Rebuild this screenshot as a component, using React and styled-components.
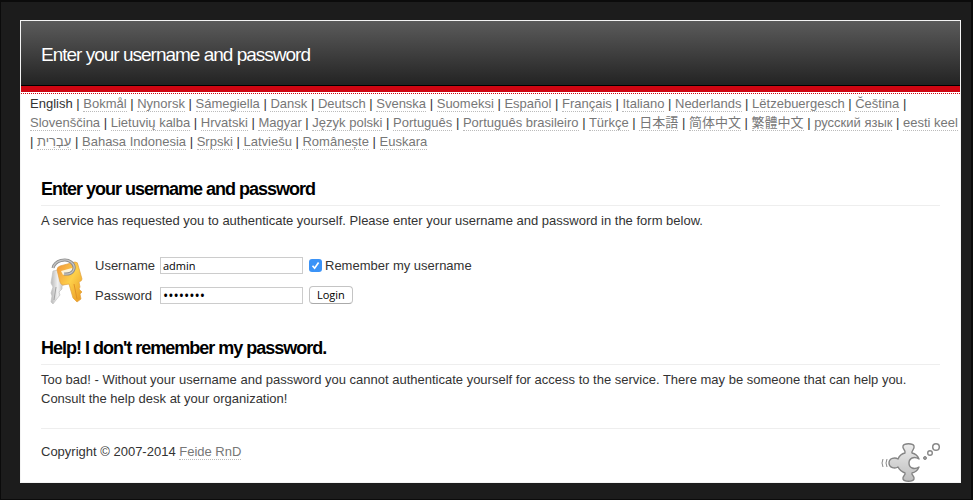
import React from "react";
import styled, { createGlobalStyle } from "styled-components";

const GlobalStyle = createGlobalStyle`
  * { box-sizing: border-box; }
  html { background: #1c1c1c; }
  body {
    margin: 0;
    color: #333;
    font: 13px/19px "Liberation Sans", Arial, "Noto Sans CJK JP", "Noto Sans CJK SC", sans-serif;
  }
`;

const Backdrop = styled.div`
  min-height: 100vh;
  padding: 18px 10px 15px 18px;
  background: #1c1c1c;
  border: solid #0b0b0b;
  border-width: 2px 2px 1px 1px;
`;

const Page = styled.div`
  margin: 0 0 0 1px;
  background: #fff;
  border: 1px solid #f4f4f4;
`;

const Header = styled.header`
  margin-bottom: 1px;
  padding: 22px 20px 20px;
  background: linear-gradient(#5b5b5b, #222);
  border-bottom: 6px solid #cf0612;
  box-shadow: inset 0 -1px #000;
`;

const Title = styled.h1`
  margin: 0;
  color: #fff;
  font-size: 19px;
  line-height: 23px;
  font-weight: normal;
  letter-spacing: -1px;
`;

const Languages = styled.nav`
  padding-left: 9px;
  border-top: 1px dotted #cf0612;
`;

const Link = styled.a`
  color: #777;
  text-decoration: none;
  white-space: nowrap;
  border-bottom: 1px dotted #bbb;
`;

const Content = styled.main`
  padding: 28px 20px 0;
`;

const Heading = styled.h2`
  margin: 0 0 5px;
  padding-bottom: 6px;
  color: #000;
  font-size: 18px;
  line-height: 20px;
  letter-spacing: -1px;
  border-bottom: 1px solid #eee;
`;

const Paragraph = styled.p`
  margin: 0;
`;

const LoginForm = styled.form`
  display: grid;
  grid-template-columns: 54px 65px 143px auto;
  grid-template-rows: 30px 30px;
  align-items: center;
  margin: 20px 0 28px;
`;

const Keys = styled.svg`
  grid-row: 1 / 3;
  align-self: end;
  width: 34px;
  height: 48px;
  margin: 0 0 4px 9px;
`;

const TextInput = styled.input`
  width: 100%;
  height: 17px;
  padding: 1px 2px;
  color: #000;
  background: #fff;
  border: 1px solid #ccc;
  border-radius: 0;
  font: 11px/13px "Open Sans", sans-serif;
  outline: none;

  &[type="password"] { font-size: 14px; }
`;

const Remember = styled.div`
  display: flex;
  align-items: center;
  gap: 3px;
  margin-left: 6px;
`;

const Check = styled.input`
  appearance: none;
  width: 13px;
  height: 13px;
  margin: 0;
  background: #3b93f7 url("data:image/svg+xml,%3Csvg xmlns='http://www.w3.org/2000/svg' viewBox='0 0 13 13'%3E%3Cpath d='M3.5 6.8 5.6 9.2 9.6 3.6' fill='none' stroke='white' stroke-width='1.7'/%3E%3C/svg%3E");
  border-radius: 3px;
`;

const Button = styled.button`
  justify-self: start;
  height: 18px;
  margin-left: 6px;
  padding: 0 7px;
  color: #000;
  background: #fff;
  border: 1px solid #c4c4c4;
  border-bottom-color: #aaa;
  border-radius: 4px;
  font: 11px/14px "Open Sans", sans-serif;
`;

const Footer = styled.footer`
  display: flex;
  justify-content: space-between;
  height: 54px;
  margin: 20px 20px 0;
  padding-top: 13px;
  border-top: 1px solid #eee;
`;

const Puzzle = styled.svg`
  width: 60px;
  height: 40px;
`;

const LANGUAGES = [
  "Bokmål", "Nynorsk", "Sámegiella", "Dansk", "Deutsch", "Svenska", "Suomeksi", "Español",
  "Français", "Italiano", "Nederlands", "Lëtzebuergesch", "Čeština", "Slovenščina",
  "Lietuvių kalba", "Hrvatski", "Magyar", "Język polski", "Português", "Português brasileiro",
  "Türkçe", "日本語", "简体中文", "繁體中文", "русский язык", "eesti keel", "עִבְרִית",
  "Bahasa Indonesia", "Srpski", "Latviešu", "Românește", "Euskara",
];

function KeysIcon() {
  return (
    <Keys viewBox="0 0 34 48" aria-hidden="true">
      <defs>
        <linearGradient id="silver">
          <stop offset="0" stopColor="#b8b8b8" />
          <stop offset="0.45" stopColor="#f2f2f2" />
          <stop offset="1" stopColor="#a8a8a8" />
        </linearGradient>
        <linearGradient id="gold" x2="1" y2="1">
          <stop offset="0" stopColor="#f2933a" />
          <stop offset="0.5" stopColor="#fdd04a" />
          <stop offset="1" stopColor="#e8961f" />
        </linearGradient>
      </defs>
      <path d="M3 13 13 11 16 25 12 28 12 31 9 34 10 37 6 42 3 46 1 44 2 38 1 35 3 29 1 25Z" fill="url(#silver)" stroke="#c2c2c2" strokeWidth=".7" />
      <path d="M6 29 4 42" stroke="#a3a3a3" />
      <path d="M7 12Q7 9 10 8L25 4Q28 4 28 7L32 21Q32 23 29 24L30 29 29 31 32 34 30 36 31 41 27 44 23 40 19 26 13 27Q11 27 10 24Z" fill="url(#gold)" stroke="#e2a13f" strokeWidth=".7" />
      <path d="M24 26 27 41" stroke="#e09228" />
      <path d="M11 13 22 10 23 14 13 17Z" fill="#fdf3d8" />
      <path d="M3 10C5 2 16 0 21 4C27 9 24 17 14 16" fill="none" stroke="#8b8b8b" strokeWidth="3" />
      <path d="M3 10C5 2 16 0 21 4C27 9 24 17 14 16" fill="none" stroke="#c4c4c4" strokeWidth="1.3" />
    </Keys>
  );
}

function PuzzleIcon() {
  return (
    <Puzzle viewBox="0 0 60 40" aria-hidden="true">
      <defs>
        <linearGradient id="piece" x2="0" y2="1">
          <stop offset="0" stopColor="#ececec" />
          <stop offset="1" stopColor="#bdbdbd" />
        </linearGradient>
      </defs>
      <path
        d="M25 11C26 8 22 7 23 4C24 1 33 1 34 4C35 7 31 9 32 11Q37 12 39 17C34 14 29 16 29 21C29 26 34 28 39 25Q37 30 32 31C31 33 35 34 34 37C33 40 24 40 23 37C22 34 26 33 25 31Q20 29 18 25C15 27 9 26 9 21C9 16 15 15 18 17Q20 12 25 11Z"
        fill="url(#piece)"
        stroke="#858585"
        strokeWidth="1.4"
        strokeLinejoin="round"
      />
      <g fill="none" stroke="#888">
        <path d="M3 17Q1 21 3 25M7 17Q5 21 7 25" />
        <circle cx="45" cy="16" r="1.5" fill="#999" />
        <circle cx="50" cy="11" r="2.3" strokeWidth="1.4" />
        <circle cx="56" cy="5" r="3.3" strokeWidth="1.5" />
      </g>
    </Puzzle>
  );
}

export default function App() {
  return (
    <>
      <GlobalStyle />
      <Backdrop>
        <Page>
          <Header>
            <Title>Enter your username and password</Title>
          </Header>
          <Languages aria-label="Language">
            English
            {LANGUAGES.map((name) => (
              <React.Fragment key={name}>
                {" | "}
                <Link href="#">{name}</Link>
              </React.Fragment>
            ))}
          </Languages>
          <Content>
            <Heading>Enter your username and password</Heading>
            <Paragraph>
              A service has requested you to authenticate yourself. Please enter your username and password in the form below.
            </Paragraph>
            <LoginForm onSubmit={(event) => event.preventDefault()}>
              <KeysIcon />
              <label htmlFor="username">Username</label>
              <TextInput id="username" defaultValue="admin" />
              <Remember>
                <Check type="checkbox" id="remember" defaultChecked />
                <label htmlFor="remember">Remember my username</label>
              </Remember>
              <label htmlFor="password">Password</label>
              <TextInput id="password" type="password" defaultValue="password" />
              <Button type="submit">Login</Button>
            </LoginForm>
            <Heading>Help! I don't remember my password.</Heading>
            <Paragraph>
              Too bad! - Without your username and password you cannot authenticate yourself for access to the service. There may be someone that can help you. Consult the help desk at your organization!
            </Paragraph>
          </Content>
          <Footer>
            <span>
              Copyright © 2007-2014 <Link href="#">Feide RnD</Link>
            </span>
            <PuzzleIcon />
          </Footer>
        </Page>
      </Backdrop>
    </>
  );
}
